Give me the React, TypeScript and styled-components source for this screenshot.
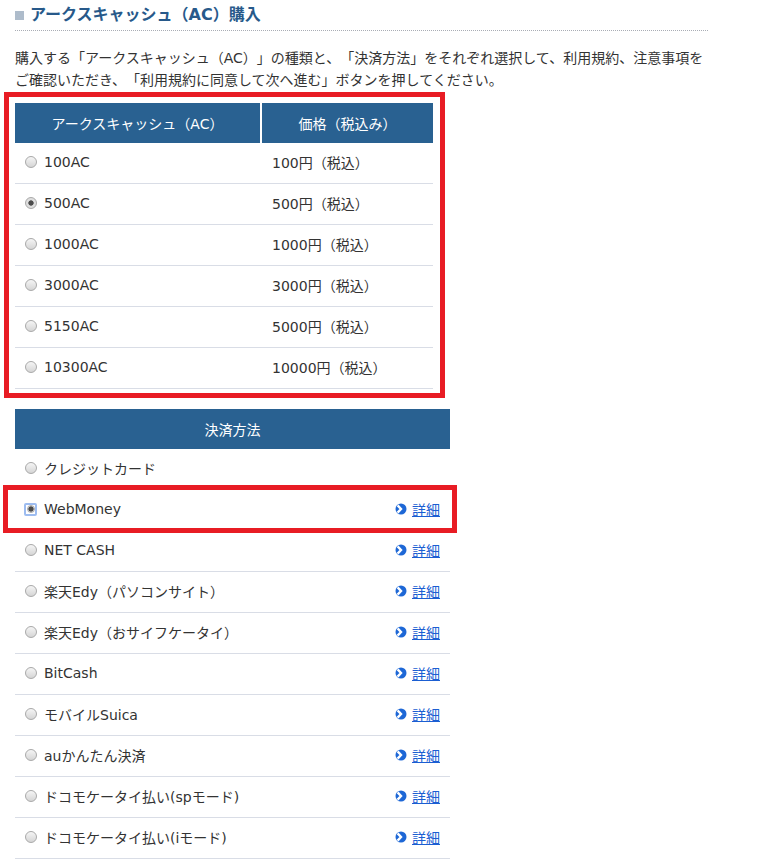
import React from "react";
import styled, { createGlobalStyle, css } from "styled-components";

const GlobalStyle = createGlobalStyle`
  body {
    margin: 0;
    background: #fff;
    color: #333;
    font-family: "DejaVu Sans", "Noto Sans CJK JP", sans-serif;
    font-size: 14px;
    text-spacing-trim: space-all;
  }
`;

const Page = styled.div`
  width: 693px;
  padding: 0 15px 20px;
`;

const Heading = styled.h2`
  display: flex;
  align-items: center;
  gap: 6px;
  margin: 0;
  padding: 3px 0;
  height: 24px;
  border-bottom: 1px dotted #a9adb5;
  font-size: 16px;
  font-weight: bold;
  color: #27598a;
  line-height: 24px;
`;

const HeadingMark = styled.span`
  width: 9px;
  height: 9px;
  margin-top: 1px;
  background: #aebccb;
`;

const Lead = styled.p`
  margin: 16px 0 12px;
  line-height: 22px;
`;

const Highlight = styled.div<{ $inset: string; $fit?: boolean }>`
  position: relative;
  width: ${(p) => (p.$fit ? "fit-content" : "auto")};
  &::after {
    content: "";
    position: absolute;
    inset: ${(p) => p.$inset};
    border: 5px solid #e81c24;
    pointer-events: none;
  }
`;

const Table = styled.div<{ $width: number; $gap?: number }>`
  width: ${(p) => p.$width}px;
  margin-top: ${(p) => p.$gap ?? 0}px;
`;

const HeadRow = styled.div<{ $cols: string }>`
  display: grid;
  grid-template-columns: ${(p) => p.$cols};
  column-gap: 2px;
`;

const HeadCell = styled.div`
  height: 40px;
  display: flex;
  align-items: center;
  justify-content: center;
  background: #296191;
  color: #fff;
`;

const Row = styled.div<{ $cols?: string }>`
  height: 38px;
  padding-bottom: 2px;
  border-bottom: 1px solid #d9dde6;
  align-items: center;
  ${(p) =>
    p.$cols
      ? css`
          display: grid;
          grid-template-columns: ${p.$cols};
          column-gap: 2px;
        `
      : css`
          display: flex;
          justify-content: space-between;
        `}
`;

const Cell = styled.label`
  display: flex;
  align-items: center;
  gap: 7px;
  padding: 0 10px;
`;

const Radio = styled.span<{ $checked?: boolean; $small?: boolean }>`
  flex: none;
  width: ${(p) => (p.$small ? 8 : 12)}px;
  height: ${(p) => (p.$small ? 8 : 12)}px;
  box-sizing: border-box;
  border-radius: 50%;
  border: 1px solid #a9a9a9;
  background: ${(p) =>
    p.$checked
      ? "radial-gradient(circle, #4b4b4b 0 2.3px, #dedede 3px)"
      : "linear-gradient(#f5f5f5, #d5d5d5)"};
`;

const FocusRing = styled.span`
  flex: none;
  width: 13px;
  height: 13px;
  box-sizing: border-box;
  display: flex;
  align-items: center;
  justify-content: center;
  border: 2px solid #9dbcf0;
  border-radius: 2px;
  margin-left: -1px;
`;

const DetailLink = styled.a`
  display: flex;
  align-items: center;
  gap: 5px;
  padding-right: 10px;
  color: #1b5ed2;
  text-decoration: underline;
  cursor: pointer;
`;

const amounts = [
  ["100AC", "100円（税込）"],
  ["500AC", "500円（税込）"],
  ["1000AC", "1000円（税込）"],
  ["3000AC", "3000円（税込）"],
  ["5150AC", "5000円（税込）"],
  ["10300AC", "10000円（税込）"],
];

const payments = [
  "クレジットカード",
  "WebMoney",
  "NET CASH",
  "楽天Edy（パソコンサイト）",
  "楽天Edy（おサイフケータイ）",
  "BitCash",
  "モバイルSuica",
  "auかんたん決済",
  "ドコモケータイ払い(spモード)",
  "ドコモケータイ払い(iモード)",
];

function ArrowIcon() {
  return (
    <svg width="12" height="12" viewBox="0 0 12 12">
      <circle cx="6" cy="6" r="5.5" fill="#1d67d6" />
      <path d="M2.6 2.4 L6 6 L2.6 9.6" stroke="#fff" strokeWidth="2.4" fill="none" />
    </svg>
  );
}

function PaymentRow({ name, index }: { name: string; index: number }) {
  const selected = name === "WebMoney";
  const row = (
    <Row>
      <Cell>
        {selected ? (
          <FocusRing>
            <Radio $checked $small />
          </FocusRing>
        ) : (
          <Radio />
        )}
        {name}
      </Cell>
      {index > 0 && (
        <DetailLink>
          <ArrowIcon />
          詳細
        </DetailLink>
      )}
    </Row>
  );
  return selected ? <Highlight $inset="-5px -7px -2px -12px">{row}</Highlight> : row;
}

export default function App() {
  return (
    <>
      <GlobalStyle />
      <Page>
        <Heading>
          <HeadingMark />
          アークスキャッシュ（AC）購入
        </Heading>
        <Lead>
          購入する「アークスキャッシュ（AC）」の種類と、「決済方法」をそれぞれ選択して、利用規約、注意事項をご確認いただき、「利用規約に同意して次へ進む」ボタンを押してください。
        </Lead>
        <Highlight $fit $inset="-11px -12px -9px -11px">
          <Table $width={418}>
            <HeadRow $cols="245px 1fr">
              <HeadCell>アークスキャッシュ（AC）</HeadCell>
              <HeadCell>価格（税込み）</HeadCell>
            </HeadRow>
            {amounts.map(([ac, price]) => (
              <Row key={ac} $cols="245px 1fr">
                <Cell>
                  <Radio $checked={ac === "500AC"} />
                  {ac}
                </Cell>
                <Cell>{price}</Cell>
              </Row>
            ))}
          </Table>
        </Highlight>
        <Table $width={435} $gap={20}>
          <HeadRow $cols="1fr">
            <HeadCell>決済方法</HeadCell>
          </HeadRow>
          {payments.map((p, i) => (
            <PaymentRow key={p} name={p} index={i} />
          ))}
        </Table>
      </Page>
    </>
  );
}
